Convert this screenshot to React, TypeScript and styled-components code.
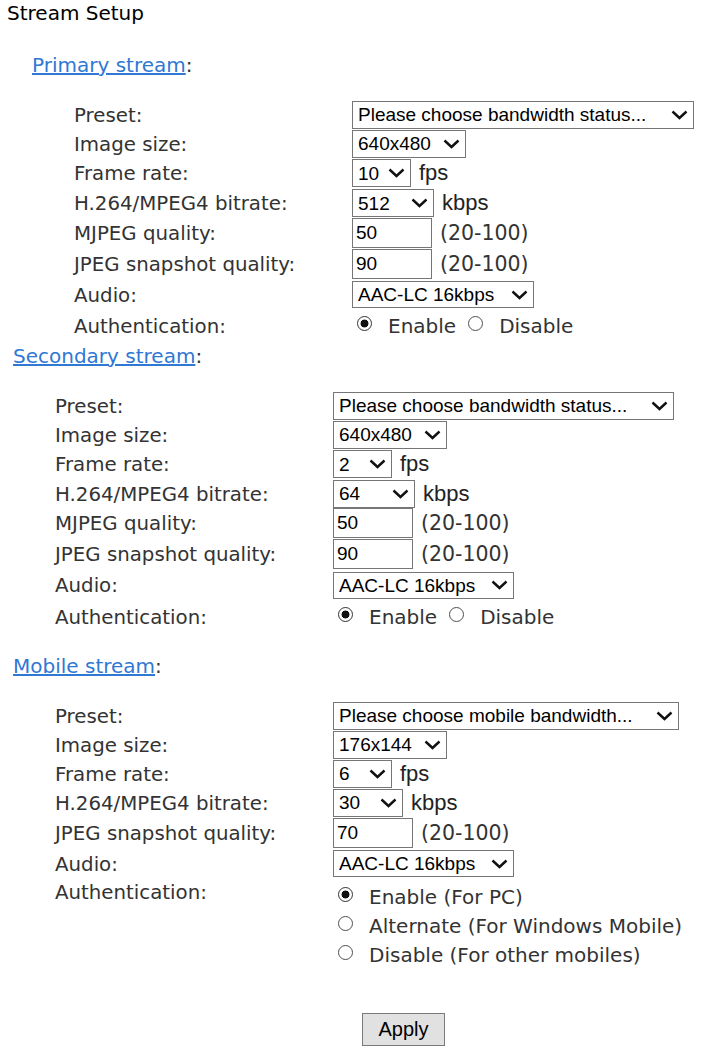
import React from "react";
import styled, { createGlobalStyle } from "styled-components";

const Global = createGlobalStyle`
  html, body { margin: 0; padding: 0; background: #fff; }
  body { font-family: "DejaVu Sans", Verdana, sans-serif; }
`;

const Page = styled.div`
  width: 710px;
  min-height: 1056px;
  display: flex;
  flex-direction: column;
`;

const Title = styled.h1`
  margin: 1px 0 0 7px;
  font-size: 20px;
  line-height: 24px;
  font-weight: normal;
  color: #000;
`;

const Section = styled.section<{ $indent: number; $top: number }>`
  display: flex;
  flex-direction: column;
  padding-left: ${(p) => p.$indent}px;
  margin-top: ${(p) => p.$top}px;
`;

const Heading = styled.div`
  font-size: 20px;
  line-height: 24px;
  color: #333;
`;

const HeadLink = styled.a`
  color: #2f78d4;
  text-decoration: underline;
  cursor: pointer;
`;

const Form = styled.div`
  display: flex;
  flex-direction: column;
  margin-top: 23px;
  padding-left: 42px;
`;

const Row = styled.div<{ $h: number; $top?: boolean }>`
  display: grid;
  grid-template-columns: 278px 1fr;
  align-items: ${(p) => (p.$top ? "start" : "center")};
  height: ${(p) => p.$h}px;
`;

const Label = styled.div<{ $pad?: number }>`
  font-size: 19.8px;
  line-height: 24px;
  color: #333;
  padding-top: ${(p) => p.$pad ?? 2}px;
`;

const Controls = styled.div`
  display: flex;
  align-items: center;
  gap: 8px;
`;

const SelectWrap = styled.span`
  position: relative;
  display: inline-flex;
  flex-shrink: 0;
`;

const NativeSelect = styled.select<{ $w: number; $h: number }>`
  appearance: none;
  -webkit-appearance: none;
  width: ${(p) => p.$w}px;
  height: ${(p) => p.$h}px;
  margin: 0;
  padding: 0 0 0 5px;
  border: 1px solid #767676;
  border-radius: 0;
  background: #fff;
  color: #000;
  font-family: "Liberation Sans", Arial, sans-serif;
  font-size: 19px;
  box-sizing: border-box;
`;

const Chevron = styled.svg`
  position: absolute;
  right: 6px;
  top: 50%;
  margin-top: -5px;
  width: 17px;
  height: 10px;
  pointer-events: none;
`;

const TextInput = styled.input`
  width: 80px;
  height: 30px;
  flex-shrink: 0;
  box-sizing: border-box;
  margin: 0;
  padding: 0 0 0 3px;
  border: 1px solid #767676;
  border-radius: 0;
  font-family: "Liberation Sans", Arial, sans-serif;
  font-size: 19px;
  color: #000;
`;

const Unit = styled.span`
  font-family: "Liberation Sans", Arial, sans-serif;
  font-size: 22px;
  color: #222;
`;

const Hint = styled.span`
  font-size: 20.5px;
  color: #333;
`;

const RadioGroup = styled.div<{ $vertical?: boolean }>`
  display: flex;
  flex-direction: ${(p) => (p.$vertical ? "column" : "row")};
  padding-top: ${(p) => (p.$vertical ? 3 : 0)}px;
`;

const RadioOption = styled.label<{ $vertical?: boolean }>`
  display: flex;
  align-items: center;
  height: ${(p) => (p.$vertical ? "29px" : "auto")};
  font-size: 20px;
  color: #333;
  margin-right: ${(p) => (p.$vertical ? 0 : 7)}px;
  white-space: nowrap;
`;

const Radio = styled.input`
  appearance: none;
  -webkit-appearance: none;
  flex: 0 0 15px;
  width: 15px;
  height: 15px;
  margin: -4px 16px 0 5px;
  border: 1.3px solid #4f4f4f;
  border-radius: 50%;
  background: #fff;
  box-sizing: border-box;
  &:checked {
    border-color: #333;
    background: radial-gradient(circle, #111 0 3.6px, #fff 4.3px);
  }
`;

const ApplyButton = styled.button`
  margin: 44px 0 0 362px;
  width: 83px;
  height: 33px;
  align-self: flex-start;
  border: 1px solid #7a7a7a;
  background: #e1e1e1;
  font-family: "Liberation Sans", Arial, sans-serif;
  font-size: 20px;
  color: #000;
  padding: 0;
`;

type RowDef =
  | { kind: "select"; label: string; value: string; w: number; sh?: number; unit?: string; h: number }
  | { kind: "input"; label: string; value: string; h: number }
  | { kind: "radio"; label: string; options: string[]; vertical?: boolean; h: number };

type SectionDef = { title: string; indent: number; top: number; rows: RowDef[] };

const sections: SectionDef[] = [
  {
    title: "Primary stream",
    indent: 32,
    top: 28,
    rows: [
      { kind: "select", label: "Preset:", value: "Please choose bandwidth status...", w: 342, h: 29 },
      { kind: "select", label: "Image size:", value: "640x480", w: 114, h: 29 },
      { kind: "select", label: "Frame rate:", value: "10", w: 59, unit: "fps", h: 30 },
      { kind: "select", label: "H.264/MPEG4 bitrate:", value: "512", w: 82, unit: "kbps", h: 30 },
      { kind: "input", label: "MJPEG quality:", value: "50", h: 30 },
      { kind: "input", label: "JPEG snapshot quality:", value: "90", h: 31 },
      { kind: "select", label: "Audio:", value: "AAC-LC 16kbps", w: 182, sh: 27, h: 31 },
      { kind: "radio", label: "Authentication:", options: ["Enable", "Disable"], h: 31 },
    ],
  },
  {
    title: "Secondary stream",
    indent: 13,
    top: 3,
    rows: [
      { kind: "select", label: "Preset:", value: "Please choose bandwidth status...", w: 341, h: 29 },
      { kind: "select", label: "Image size:", value: "640x480", w: 114, h: 29 },
      { kind: "select", label: "Frame rate:", value: "2", w: 59, unit: "fps", h: 30 },
      { kind: "select", label: "H.264/MPEG4 bitrate:", value: "64", w: 82, unit: "kbps", h: 29 },
      { kind: "input", label: "MJPEG quality:", value: "50", h: 30 },
      { kind: "input", label: "JPEG snapshot quality:", value: "90", h: 31 },
      { kind: "select", label: "Audio:", value: "AAC-LC 16kbps", w: 181, sh: 27, h: 32 },
      { kind: "radio", label: "Authentication:", options: ["Enable", "Disable"], h: 31 },
    ],
  },
  {
    title: "Mobile stream",
    indent: 13,
    top: 22,
    rows: [
      { kind: "select", label: "Preset:", value: "Please choose mobile bandwidth...", w: 346, h: 29 },
      { kind: "select", label: "Image size:", value: "176x144", w: 114, h: 29 },
      { kind: "select", label: "Frame rate:", value: "6", w: 59, unit: "fps", h: 29 },
      { kind: "select", label: "H.264/MPEG4 bitrate:", value: "30", w: 70, unit: "kbps", h: 29 },
      { kind: "input", label: "JPEG snapshot quality:", value: "70", h: 31 },
      { kind: "select", label: "Audio:", value: "AAC-LC 16kbps", w: 181, sh: 27, h: 31 },
      {
        kind: "radio",
        label: "Authentication:",
        options: ["Enable (For PC)", "Alternate (For Windows Mobile)", "Disable (For other mobiles)"],
        vertical: true,
        h: 90,
      },
    ],
  },
];

function Select({ value, w, h }: { value: string; w: number; h: number }) {
  return (
    <SelectWrap>
      <NativeSelect $w={w} $h={h} defaultValue={value}>
        <option value={value}>{value}</option>
      </NativeSelect>
      <Chevron viewBox="0 0 17 10">
        <polyline points="1.5,1.5 8.5,8 15.5,1.5" fill="none" stroke="#111" strokeWidth="2.4" />
      </Chevron>
    </SelectWrap>
  );
}

function FormRow({ row, name }: { row: RowDef; name: string }) {
  if (row.kind === "select") {
    return (
      <Row $h={row.h}>
        <Label>{row.label}</Label>
        <Controls>
          <Select value={row.value} w={row.w} h={row.sh ?? 28} />
          {row.unit && <Unit>{row.unit}</Unit>}
        </Controls>
      </Row>
    );
  }
  if (row.kind === "input") {
    return (
      <Row $h={row.h}>
        <Label>{row.label}</Label>
        <Controls>
          <TextInput defaultValue={row.value} />
          <Hint>(20-100)</Hint>
        </Controls>
      </Row>
    );
  }
  return (
    <Row $h={row.h} $top={row.vertical}>
      <Label $pad={row.vertical ? 2 : 2}>{row.label}</Label>
      <RadioGroup $vertical={row.vertical}>
        {row.options.map((o, i) => (
          <RadioOption key={o} $vertical={row.vertical}>
            <Radio type="radio" name={name} defaultChecked={i === 0} />
            {o}
          </RadioOption>
        ))}
      </RadioGroup>
    </Row>
  );
}

export default function App() {
  return (
    <Page>
      <Global />
      <Title>Stream Setup</Title>
      {sections.map((s) => (
        <Section key={s.title} $indent={s.indent} $top={s.top}>
          <Heading>
            <HeadLink>{s.title}</HeadLink>:
          </Heading>
          <Form>
            {s.rows.map((r) => (
              <FormRow key={r.label} row={r} name={s.title} />
            ))}
          </Form>
        </Section>
      ))}
      <ApplyButton>Apply</ApplyButton>
    </Page>
  );
}
